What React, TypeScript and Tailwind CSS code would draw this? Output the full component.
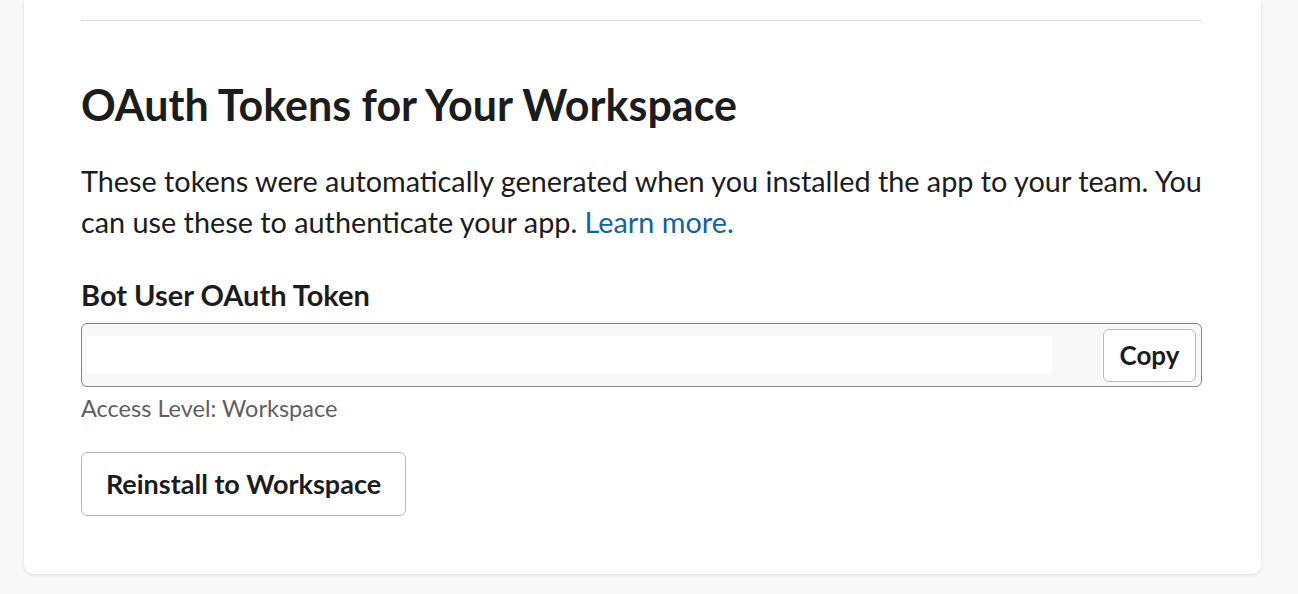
import React from "react";

export default function App() {
  return (
    <div className="min-h-[594px] w-full bg-[#f8f8f8]" style={{ fontFamily: "Lato, 'Noto Sans', sans-serif" }}>
      <div className="mx-[24px] w-[1237px] rounded-b-[9px] bg-white pl-[57px] pr-[59px] pt-[20px] pb-[58px] shadow-[0_1px_3px_rgba(0,0,0,0.12)]">
        <div className="h-px w-full bg-[#dddddd]" />
        <h2 className="mt-[58px] whitespace-nowrap text-[43px] font-bold leading-[52px] text-[#1d1c1d]">
          OAuth Tokens for Your Workspace
        </h2>
        <p className="mt-[30px] whitespace-nowrap text-[28.8px] leading-[41px] text-[#1d1c1d]">
          These tokens were automatically generated when you installed the app to your team. You
          <br />
          can use these to authenticate your app. <a className="text-[#1264a3]">Learn more.</a>
        </p>
        <div className="mt-[35px] text-[29px] font-bold leading-[34px] text-[#1d1c1d]">Bot User OAuth Token</div>
        <div className="mt-[11px] flex h-[64px] items-center justify-between rounded-[6px] border border-[#868686] bg-[#f8f8f8] pl-[5px] pr-[5px]">
          <div className="h-[38px] w-[965px] bg-white" />
          <button className="h-[53px] w-[93px] rounded-[6px] border border-[#bbbbbb] bg-white text-[26px] font-bold text-[#1d1c1d]">
            Copy
          </button>
        </div>
        <div className="mt-[7px] text-[23.5px] leading-[28px] text-[#616061]">Access Level: Workspace</div>
        <button className="mt-[30px] h-[64px] w-[325px] rounded-[6px] border border-[#bbbbbb] bg-white text-[27px] font-bold text-[#1d1c1d]">
          Reinstall to Workspace
        </button>
      </div>
    </div>
  );
}
